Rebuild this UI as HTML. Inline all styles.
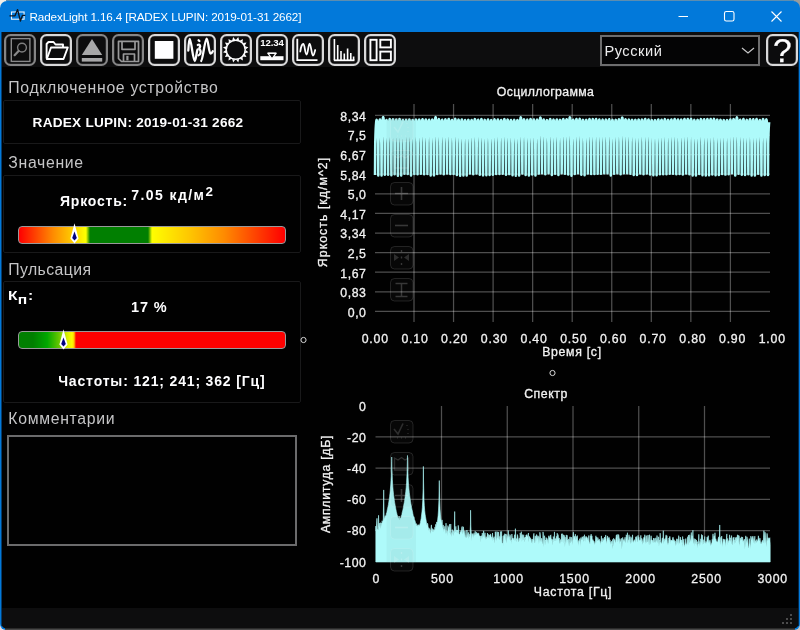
<!DOCTYPE html>
<html lang="ru">
<head>
<meta charset="utf-8">
<title>RadexLight 1.16.4</title>
<style>
*{box-sizing:border-box;margin:0;padding:0}
html,body{width:800px;height:630px;overflow:hidden}
body{background:#b8b8b8;opacity:0.9999;font-family:"Liberation Sans",sans-serif;position:relative}
.abs{position:absolute}
#topline{position:absolute;left:6px;top:0;width:788px;height:1px;background:#5c8db0}
#win{position:absolute;left:0;top:1px;width:800px;height:629px;background:#0279da;border-radius:7px 7px 6px 6px;overflow:hidden;will-change:transform}
#edge{position:absolute;left:1px;top:31px;width:1px;height:594px;background:#043d6e}
#edge2{position:absolute;left:798px;top:31px;width:1px;height:594px;background:#02284a}
#client{position:absolute;left:2px;top:31px;width:796px;height:596px;background:#000;overflow:hidden;border-radius:0 0 4px 4px;opacity:0.9999}
#botline{position:absolute;left:5px;top:627px;width:790px;height:2px;background:linear-gradient(#2a2a2a 0,#2a2a2a 1px,#484848 1px,#484848 2px)}
#title{position:absolute;left:29.5px;top:8px;height:16px;line-height:16px;font-size:11.7px;letter-spacing:-0.13px;color:#fff;white-space:nowrap}
#toolbar{position:absolute;left:0;top:0;width:796px;height:35px;background:#0e0e0e}
.tb{position:absolute;top:2px;width:32px;height:32px;border:2px solid #dadada;border-radius:6.5px;background:#0d0d0d;box-shadow:inset 0 0 0 0.6px rgba(255,255,255,0.35)}
.tb.dis{border-color:#868686;box-shadow:inset 0 0 0 0.6px rgba(255,255,255,0.2)}
.tb svg{position:absolute;left:-2px;top:-2px;width:32px;height:32px;overflow:visible}
#combo{position:absolute;left:598px;top:3px;width:160px;height:31px;border:2px solid #6e6e6e;background:#050505}
#combo span{position:absolute;left:2.4px;top:3.9px;font-size:14.6px;line-height:20px;color:#eee;letter-spacing:0.55px}
#status{position:absolute;left:0;top:576px;width:796px;height:20px;background:#0e0e0e}
.hd{position:absolute;left:6.3px;font-size:15.8px;line-height:20px;color:#c6c6c6;letter-spacing:0.68px;white-space:nowrap}
.grp{position:absolute;left:1px;width:298px;border:1px solid #1a1a1a;border-radius:2px}
.b{position:absolute;font-weight:bold;color:#fff;white-space:nowrap;line-height:20px}
.bar{position:absolute;left:16px;width:268px;height:18px;border:1px solid #9a9a9a;border-radius:4px}
.ct{position:absolute;-webkit-text-stroke:0.3px #f2f2f2;color:#f2f2f2;font-size:12.3px;line-height:14px;white-space:nowrap;letter-spacing:0.55px}
.yl{text-align:right;width:60px}
.xl{text-align:center;width:60px}
.zb{position:absolute;width:23px;height:23px;border:1px solid #303030;border-radius:4px;background:rgba(20,20,20,0.25)}
</style>
</head>
<body>
<div class="abs" style="left:0;top:0;width:8px;height:8px;background:#f2efe8"></div><div class="abs" style="left:0;top:622px;width:8px;height:8px;background:#ecdcdc"></div><div class="abs" style="left:792px;top:0;width:8px;height:8px;background:#9a9c9c"></div><div class="abs" style="left:792px;top:622px;width:8px;height:8px;background:#c8c8c8"></div>
<div id="topline"></div>
<div id="win">
  <!-- title bar -->
  <svg class="abs" style="left:9px;top:7px" width="17" height="15" viewBox="0 0 17 15">
    <rect x="2.5" y="4" width="12.6" height="7.2" fill="none" stroke="#eaf3fc" stroke-width="1.1"/>
    <path d="M0.5,7.8 H6 L8.6,1.6 L11.4,13 L13.4,7.4 H16.3" fill="none" stroke="#10151c" stroke-width="1.35" stroke-linejoin="round"/>
  </svg>
  <div id="title">RadexLight 1.16.4 [RADEX LUPIN: 2019-01-31 2662]</div>
  <svg class="abs" style="left:660px;top:0" width="139" height="31" viewBox="0 0 139 31">
    <path d="M18.5,15.5 H28" stroke="#fff" stroke-width="1" fill="none"/>
    <rect x="64.5" y="10.5" width="9.5" height="9.5" rx="1.8" fill="none" stroke="#fff" stroke-width="1.1"/>
    <path d="M111.5,10.5 L121.5,20.5 M121.5,10.5 L111.5,20.5" stroke="#fff" stroke-width="1.1" fill="none"/>
  </svg>
  <div id="edge"></div><div id="edge2"></div>
  <div id="client">
    <div id="toolbar">
      <div class="tb dis" style="left:2px"><svg viewBox="0 0 32 32" fill="none" stroke="#9c9c9c" stroke-width="1.4"><rect x="7.3" y="4.6" width="18.6" height="22.8" stroke="#8a8a8a"/><circle cx="18" cy="13.6" r="4.4" stroke="#7e7e7e"/><path d="M14.6,17 L10.6,21.2" stroke-width="2.2" stroke-linecap="round" stroke="#8a8a8a"/></svg></div>
      <div class="tb" style="left:38px"><svg viewBox="0 0 32 32" fill="none" stroke="#fff" stroke-width="1.9" stroke-linejoin="round"><path d="M6.6,24.5 V10 L8.5,8 H13.5 L15.5,10.5 H23 V13.2"/><path d="M6.8,25 L11,13.5 H27.8 L23.5,25 Z"/></svg></div>
      <div class="tb dis" style="left:74px"><svg viewBox="0 0 32 32" fill="#a8a8a8"><path d="M16,5 L26.2,21 H5.8 Z"/><rect x="5.8" y="24" width="20.4" height="3.6"/></svg></div>
      <div class="tb dis" style="left:110px"><svg viewBox="0 0 32 32" fill="none" stroke="#9a9a9a" stroke-width="1.7" stroke-linejoin="round"><path d="M6.5,7.3 H26.5 V27.5 H9.5 L6.5,24.5 Z"/><path d="M10,7.5 V15.3 H23 V7.5"/><path d="M11.5,27.3 V20 H22.5 V27.3"/><rect x="14.3" y="21.8" width="2.2" height="4.6" fill="#9a9a9a" stroke="none"/></svg></div>
      <div class="tb" style="left:146px"><svg viewBox="0 0 32 32"><rect x="6.8" y="7" width="18.6" height="17.8" fill="#fff"/></svg></div>
      <div class="tb" style="left:182px"><svg viewBox="0 0 32 32" fill="none" stroke="#fff" stroke-width="2.3" stroke-linecap="round" stroke-linejoin="round"><path d="M4.3,16.5 C4.6,10 5,5 5.8,5 C7.2,5 9,27 10.8,27 C12,27 12.6,17 13.6,15.5"/><path d="M14.6,6.3 L15.4,7"/><path d="M13.8,11 C15.5,10 16.8,11.5 15.8,13.5 C14.8,15 15,15 16,15.8 C17.3,17.5 16.5,21 14.5,21.3"/><path d="M17.3,27 C18.5,27 21,4.6 22.6,4.6 C24.2,4.6 24.8,19.5 26.6,19.5 C27.6,19.5 28.2,18.6 28.8,17.3"/></svg></div>
      <div class="tb" style="left:218px"><svg viewBox="0 0 32 32"><circle cx="15.7" cy="15.7" r="9.5" fill="none" stroke="#fff" stroke-width="1.5"/><path d="M25.60,15.99 L28.45,18.24 L24.95,19.22 Z M24.73,19.76 L26.51,22.92 L22.90,22.49 Z M22.49,22.90 L22.92,26.51 L19.76,24.73 Z M19.22,24.95 L18.24,28.45 L15.99,25.60 Z M15.41,25.60 L13.16,28.45 L12.18,24.95 Z M11.64,24.73 L8.48,26.51 L8.91,22.90 Z M8.50,22.49 L4.89,22.92 L6.67,19.76 Z M6.45,19.22 L2.95,18.24 L5.80,15.99 Z M5.80,15.41 L2.95,13.16 L6.45,12.18 Z M6.67,11.64 L4.89,8.48 L8.50,8.91 Z M8.91,8.50 L8.48,4.89 L11.64,6.67 Z M12.18,6.45 L13.16,2.95 L15.41,5.80 Z M15.99,5.80 L18.24,2.95 L19.22,6.45 Z M19.76,6.67 L22.92,4.89 L22.49,8.50 Z M22.90,8.91 L26.51,8.48 L24.73,11.64 Z M24.95,12.18 L28.45,13.16 L25.60,15.41 Z" fill="#fff"/></svg></div>
      <div class="tb" style="left:254px"><div style="position:absolute;left:-2px;top:1.4px;width:32px;text-align:center;font-weight:bold;font-size:9.6px;line-height:12px;color:#fff;letter-spacing:-0.1px">12.34</div><svg viewBox="0 0 32 32"><rect x="4.3" y="22.2" width="23.2" height="4" fill="#fff"/><path d="M12,19.3 H20 L16,24.8 Z" fill="#111" stroke="#fff" stroke-width="1.3" stroke-linejoin="round"/><path d="M11.6,19.2 H20.4" stroke="#fff" stroke-width="1.4"/></svg></div>
      <div class="tb" style="left:290px"><svg viewBox="0 0 32 32" fill="none" stroke="#fff" stroke-width="1.8"><path d="M5.3,4.8 V26.2 H25.5"/><path d="M8.3,17.5 C9,12 10.4,10 11.3,10 C12.8,10 13,20.5 14.6,20.5 C16,20.5 16.3,9.6 17.6,9.6 C19,9.6 19.5,21.5 21,21.5 C22,21.5 22.5,18.5 23.2,16" stroke-linecap="round"/></svg></div>
      <div class="tb" style="left:326px"><svg viewBox="0 0 32 32" fill="none" stroke="#fff" stroke-width="1.6"><path d="M5.8,26.3 H26.5" stroke-width="1.8"/><path d="M6.4,5 V26 M9.7,11 V26 M13,17 V26 M16.3,19.5 V26 M19.6,14.5 V26 M22.8,19 V26 M25.6,22.5 V26"/></svg></div>
      <div class="tb" style="left:362px"><svg viewBox="0 0 32 32" fill="none" stroke="#fff" stroke-width="1.9"><rect x="6.4" y="5.8" width="6.2" height="20.4"/><rect x="16.3" y="5.8" width="10.6" height="7.6"/><rect x="16.3" y="17.6" width="10.6" height="8.6"/></svg></div>
      <div id="combo"><span>Русский</span>
        <svg class="abs" style="left:138px;top:9px" width="16" height="10" viewBox="0 0 16 10"><path d="M2,2 L8,7 L14,2" fill="none" stroke="#c8c8c8" stroke-width="1.2"/></svg>
      </div>
      <div class="tb" style="left:764px"><svg viewBox="0 0 32 32"><text x="16.4" y="28.2" text-anchor="middle" font-family="Liberation Sans,sans-serif" font-size="33.5" fill="#fff" stroke="#fff" stroke-width="0.25">?</text></svg></div>
    </div>

    <!-- left panel : coordinates are page_y-32, page_x-2 -->
    <div class="hd" style="top:45.5px">Подключенное устройство</div>
    <div class="grp" style="top:68px;height:44px"></div>
    <div class="b" style="left:30.6px;top:81.3px;font-size:13.6px;letter-spacing:0.24px">RADEX LUPIN: 2019-01-31 2662</div>

    <div class="hd" style="top:121.3px">Значение</div>
    <div class="grp" style="top:143px;height:78px"></div>
    <div class="b" style="left:58px;top:159.4px;font-size:14px;letter-spacing:0.78px">Яркость:</div>
    <div class="b" style="left:129.3px;top:153px;font-size:14px;letter-spacing:1.42px">7.05 кд/м<span style="font-size:13.4px;position:relative;top:-4.2px;left:0.2px;letter-spacing:0">2</span></div>
    <div class="bar" style="top:194px;background:linear-gradient(to right,#ff0000 0px,#ff8c00 34px,#ffc800 52px,#ffff00 66px,#ffff00 67px,#008000 71px,#008000 129px,#ffff00 133px,#ffc800 170px,#ff8c00 205px,#ff3000 245px,#ff0000 266px)"></div>

    <svg class="abs" style="left:66.9px;top:191.2px" width="11" height="22" viewBox="0 0 11 22"><path d="M5.5,0.3 L9.6,15.6 L5.5,20.6 L1.4,15.6 Z" fill="#fff"/><path d="M5.5,8.6 L7.8,15 L5.5,17.4 L3.2,15 Z" fill="#000080"/></svg>
    <div class="hd" style="top:227.5px;letter-spacing:0.4px">Пульсация</div>
    <div class="grp" style="top:249px;height:122px"></div>
    <div class="b" style="left:6.4px;top:254.3px;font-size:13.6px;letter-spacing:0.2px;transform:scaleX(1.15);transform-origin:0 0">К<span style="font-size:13.6px;position:relative;top:3.5px;letter-spacing:0.7px">п</span>:</div>
    <div class="b" style="left:129px;top:265px;font-size:14.5px;letter-spacing:0.9px">17 %</div>
    <div class="bar" style="top:299px;background:linear-gradient(to right,#008000 0px,#008000 14px,#00a800 28px,#66c800 40px,#d8ee00 48px,#ffff00 53px,#ffd000 55px,#ff0000 57px,#ff0000 266px)"></div>
    <svg class="abs" style="left:55.9px;top:297.4px" width="11" height="22" viewBox="0 0 11 22"><path d="M5.5,0.3 L9.6,15.6 L5.5,20.6 L1.4,15.6 Z" fill="#fff"/><path d="M5.5,8.6 L7.8,15 L5.5,17.4 L3.2,15 Z" fill="#000080"/></svg>
    <div class="b" style="left:56.2px;top:339px;font-size:14px;letter-spacing:0.84px">Частоты: 121; 241; 362 [Гц]</div>

    <div class="hd" style="top:376.8px">Комментарии</div>
    <div class="abs" style="left:5px;top:403px;width:290px;height:111px;border:2px solid #6c6c6c"></div>

    <div id="status">
      <svg class="abs" style="left:780.4px;top:5.8px" width="12" height="12" viewBox="0 0 12 12" fill="#4c4c4c">
        <rect x="8" y="0" width="2" height="2"/><rect x="4" y="4" width="2" height="2"/><rect x="8" y="4" width="2" height="2"/>
        <rect x="0" y="8" width="2" height="2"/><rect x="4" y="8" width="2" height="2"/><rect x="8" y="8" width="2" height="2"/>
      </svg>
    </div>
  </div>
  <div id="botline"></div>
</div>

<!-- charts: absolute page coordinates -->
<svg class="abs" style="left:0;top:0" width="800" height="630" viewBox="0 0 800 630">
  <g stroke="rgba(255,255,255,0.31)" stroke-width="1.25" fill="none">
    <path d="M375,115.4 H770 M375,135.0 H770 M375,154.6 H770 M375,174.2 H770 M375,193.8 H770 M375,213.4 H770 M375,233.0 H770 M375,252.6 H770 M375,272.2 H770 M375,291.8 H770 M375,311.4 H770"/>
    <path d="M414.00,104 V322 M453.55,104 V322 M493.10,104 V322 M532.65,104 V322 M572.20,104 V322 M611.75,104 V322 M651.30,104 V322 M690.85,104 V322 M730.40,104 V322"/>
    <path d="M375.5,436.75 H770 M375.5,468.00 H770 M375.5,499.25 H770 M375.5,530.50 H770"/>
    <path d="M441.50,406 V562 M507.25,406 V562 M573.00,406 V562 M638.75,406 V562 M704.50,406 V562"/>
  </g>
  <path d="M375.00,174.93 L375.23,143.56 L375.47,134.69 L375.70,128.84 L375.94,124.75 L376.17,122.01 L376.40,120.41 L376.64,119.89 L376.87,120.41 L377.11,122.01 L377.34,124.75 L377.57,128.84 L377.81,134.69 L378.04,143.56 L378.27,175.58 L378.51,143.81 L378.74,134.72 L378.98,128.70 L379.21,124.48 L379.44,121.64 L379.68,119.98 L379.91,119.44 L380.15,119.98 L380.38,121.64 L380.61,124.48 L380.85,128.70 L381.08,134.72 L381.32,143.81 L381.55,175.61 L381.78,142.51 L382.02,133.04 L382.25,126.77 L382.49,122.38 L382.72,119.41 L382.95,117.69 L383.19,117.12 L383.42,117.69 L383.66,119.41 L383.89,122.38 L384.12,126.77 L384.36,133.04 L384.59,142.51 L384.82,174.64 L385.06,143.40 L385.29,134.60 L385.53,128.81 L385.76,124.78 L385.99,122.07 L386.23,120.50 L386.46,119.98 L386.70,120.50 L386.93,122.07 L387.16,124.78 L387.40,128.81 L387.63,134.60 L387.87,143.40 L388.10,174.67 L388.33,142.91 L388.57,133.96 L388.80,128.07 L389.04,123.97 L389.27,121.22 L389.50,119.62 L389.74,119.09 L389.97,119.62 L390.20,121.22 L390.44,123.97 L390.67,128.07 L390.91,133.96 L391.14,142.91 L391.37,175.19 L391.61,143.44 L391.84,134.42 L392.08,128.47 L392.31,124.30 L392.54,121.49 L392.78,119.86 L393.01,119.33 L393.25,119.86 L393.48,121.49 L393.71,124.30 L393.95,128.47 L394.18,134.42 L394.42,143.44 L394.65,174.27 L394.88,142.89 L395.12,134.11 L395.35,128.35 L395.59,124.35 L395.82,121.66 L396.05,120.11 L396.29,119.60 L396.52,120.11 L396.75,121.66 L396.99,124.35 L397.22,128.35 L397.46,134.11 L397.69,142.89 L397.92,175.64 L398.16,143.64 L398.39,134.48 L398.63,128.41 L398.86,124.15 L399.09,121.28 L399.33,119.61 L399.56,119.06 L399.80,119.61 L400.03,121.28 L400.26,124.15 L400.50,128.41 L400.73,134.48 L400.97,143.64 L401.20,175.39 L401.43,143.95 L401.67,134.98 L401.90,129.05 L402.14,124.89 L402.37,122.09 L402.60,120.46 L402.84,119.93 L403.07,120.46 L403.30,122.09 L403.54,124.89 L403.77,129.05 L404.01,134.98 L404.24,143.95 L404.47,173.65 L404.71,142.55 L404.94,133.94 L405.18,128.33 L405.41,124.44 L405.64,121.85 L405.88,120.34 L406.11,119.85 L406.35,120.34 L406.58,121.85 L406.81,124.44 L407.05,128.33 L407.28,133.94 L407.52,142.55 L407.75,174.11 L407.98,142.78 L408.22,134.04 L408.45,128.31 L408.68,124.34 L408.92,121.68 L409.15,120.13 L409.39,119.63 L409.62,120.13 L409.85,121.68 L410.09,124.34 L410.32,128.31 L410.56,134.04 L410.79,142.78 L411.02,175.60 L411.26,144.15 L411.49,135.15 L411.73,129.18 L411.96,125.00 L412.19,122.18 L412.43,120.53 L412.66,120.00 L412.90,120.53 L413.13,122.18 L413.36,125.00 L413.60,129.18 L413.83,135.15 L414.07,144.15 L414.30,174.00 L414.53,142.66 L414.77,133.93 L415.00,128.22 L415.23,124.26 L415.47,121.60 L415.70,120.07 L415.94,119.56 L416.17,120.07 L416.40,121.60 L416.64,124.26 L416.87,128.22 L417.11,133.93 L417.34,142.66 L417.57,174.25 L417.81,142.83 L418.04,134.04 L418.28,128.29 L418.51,124.28 L418.74,121.60 L418.98,120.04 L419.21,119.53 L419.45,120.04 L419.68,121.60 L419.91,124.28 L420.15,128.29 L420.38,134.04 L420.61,142.83 L420.85,173.71 L421.08,142.25 L421.32,133.53 L421.55,127.84 L421.78,123.90 L422.02,121.27 L422.25,119.74 L422.49,119.24 L422.72,119.74 L422.95,121.27 L423.19,123.90 L423.42,127.84 L423.66,133.53 L423.89,142.25 L424.12,174.28 L424.36,142.81 L424.59,134.00 L424.83,128.23 L425.06,124.21 L425.29,121.52 L425.53,119.96 L425.76,119.45 L426.00,119.96 L426.23,121.52 L426.46,124.21 L426.70,128.23 L426.93,134.00 L427.16,142.81 L427.40,173.88 L427.63,142.66 L427.87,133.98 L428.10,128.31 L428.33,124.38 L428.57,121.75 L428.80,120.23 L429.04,119.73 L429.27,120.23 L429.50,121.75 L429.74,124.38 L429.97,128.31 L430.21,133.98 L430.44,142.66 L430.67,175.46 L430.91,143.80 L431.14,134.76 L431.38,128.77 L431.61,124.58 L431.84,121.76 L432.08,120.11 L432.31,119.57 L432.54,120.11 L432.78,121.76 L433.01,124.58 L433.25,128.77 L433.48,134.76 L433.71,143.80 L433.95,175.37 L434.18,142.33 L434.42,132.92 L434.65,126.70 L434.88,122.34 L435.12,119.41 L435.35,117.70 L435.59,117.14 L435.82,117.70 L436.05,119.41 L436.29,122.34 L436.52,126.70 L436.76,132.92 L436.99,142.33 L437.22,174.04 L437.46,142.46 L437.69,133.65 L437.93,127.90 L438.16,123.90 L438.39,121.22 L438.63,119.67 L438.86,119.17 L439.09,119.67 L439.33,121.22 L439.56,123.90 L439.80,127.90 L440.03,133.65 L440.26,142.46 L440.50,173.50 L440.73,142.34 L440.97,133.74 L441.20,128.14 L441.43,124.27 L441.67,121.68 L441.90,120.19 L442.14,119.70 L442.37,120.19 L442.60,121.68 L442.84,124.27 L443.07,128.14 L443.31,133.74 L443.54,142.34 L443.77,174.23 L444.01,142.73 L444.24,133.92 L444.48,128.15 L444.71,124.14 L444.94,121.45 L445.18,119.89 L445.41,119.38 L445.64,119.89 L445.88,121.45 L446.11,124.14 L446.35,128.15 L446.58,133.92 L446.81,142.73 L447.05,173.59 L447.28,141.99 L447.52,133.25 L447.75,127.55 L447.98,123.61 L448.22,120.98 L448.45,119.45 L448.69,118.96 L448.92,119.45 L449.15,120.98 L449.39,123.61 L449.62,127.55 L449.86,133.25 L450.09,141.99 L450.32,174.05 L450.56,142.94 L450.79,134.27 L451.02,128.60 L451.26,124.66 L451.49,122.02 L451.73,120.49 L451.96,119.99 L452.19,120.49 L452.43,122.02 L452.66,124.66 L452.90,128.60 L453.13,134.27 L453.36,142.94 L453.60,174.09 L453.83,142.35 L454.07,133.49 L454.30,127.69 L454.53,123.67 L454.77,120.97 L455.00,119.41 L455.24,118.90 L455.47,119.41 L455.70,120.97 L455.94,123.67 L456.17,127.69 L456.41,133.49 L456.64,142.35 L456.87,175.03 L457.11,143.48 L457.34,134.54 L457.57,128.64 L457.81,124.52 L458.04,121.75 L458.28,120.14 L458.51,119.61 L458.74,120.14 L458.98,121.75 L459.21,124.52 L459.45,128.64 L459.68,134.54 L459.91,143.48 L460.15,175.70 L460.38,143.96 L460.62,134.86 L460.85,128.82 L461.08,124.59 L461.32,121.73 L461.55,120.07 L461.79,119.52 L462.02,120.07 L462.25,121.73 L462.49,124.59 L462.72,128.82 L462.95,134.86 L463.19,143.96 L463.42,175.46 L463.66,144.04 L463.89,135.07 L464.12,129.13 L464.36,124.97 L464.59,122.16 L464.83,120.53 L465.06,120.00 L465.29,120.53 L465.53,122.16 L465.76,124.97 L466.00,129.13 L466.23,135.07 L466.46,144.04 L466.70,175.43 L466.93,143.89 L467.17,134.89 L467.40,128.93 L467.63,124.76 L467.87,121.95 L468.10,120.31 L468.34,119.77 L468.57,120.31 L468.80,121.95 L469.04,124.76 L469.27,128.93 L469.50,134.89 L469.74,143.89 L469.97,173.51 L470.21,142.51 L470.44,133.95 L470.67,128.37 L470.91,124.52 L471.14,121.95 L471.38,120.46 L471.61,119.97 L471.84,120.46 L472.08,121.95 L472.31,124.52 L472.55,128.37 L472.78,133.95 L473.01,142.51 L473.25,174.34 L473.48,142.62 L473.72,133.73 L473.95,127.90 L474.18,123.84 L474.42,121.12 L474.65,119.54 L474.88,119.03 L475.12,119.54 L475.35,121.12 L475.59,123.84 L475.82,127.90 L476.05,133.73 L476.29,142.62 L476.52,173.53 L476.76,142.39 L476.99,133.79 L477.22,128.19 L477.46,124.31 L477.69,121.72 L477.93,120.23 L478.16,119.74 L478.39,120.23 L478.63,121.72 L478.86,124.31 L479.10,128.19 L479.33,133.79 L479.56,142.39 L479.80,174.84 L480.03,143.00 L480.27,134.00 L480.50,128.08 L480.73,123.95 L480.97,121.17 L481.20,119.56 L481.43,119.03 L481.67,119.56 L481.90,121.17 L482.14,123.95 L482.37,128.08 L482.60,134.00 L482.84,143.00 L483.07,175.37 L483.31,143.89 L483.54,134.92 L483.77,128.98 L484.01,124.82 L484.24,122.02 L484.48,120.39 L484.71,119.86 L484.94,120.39 L485.18,122.02 L485.41,124.82 L485.65,128.98 L485.88,134.92 L486.11,143.89 L486.35,175.16 L486.58,143.52 L486.82,134.53 L487.05,128.60 L487.28,124.45 L487.52,121.65 L487.75,120.03 L487.98,119.50 L488.22,120.03 L488.45,121.65 L488.69,124.45 L488.92,128.60 L489.15,134.53 L489.39,143.52 L489.62,175.08 L489.86,143.78 L490.09,134.90 L490.32,129.04 L490.56,124.95 L490.79,122.19 L491.03,120.59 L491.26,120.06 L491.49,120.59 L491.73,122.19 L491.96,124.95 L492.20,129.04 L492.43,134.90 L492.66,143.78 L492.90,174.81 L493.13,143.19 L493.36,134.26 L493.60,128.38 L493.83,124.28 L494.07,121.52 L494.30,119.93 L494.53,119.40 L494.77,119.93 L495.00,121.52 L495.24,124.28 L495.47,128.38 L495.70,134.26 L495.94,143.19 L496.17,173.98 L496.41,142.58 L496.64,133.84 L496.87,128.12 L497.11,124.16 L497.34,121.50 L497.58,119.96 L497.81,119.46 L498.04,119.96 L498.28,121.50 L498.51,124.16 L498.75,128.12 L498.98,133.84 L499.21,142.58 L499.45,174.01 L499.68,142.92 L499.91,134.26 L500.15,128.59 L500.38,124.66 L500.62,122.03 L500.85,120.50 L501.08,120.00 L501.32,120.50 L501.55,122.03 L501.79,124.66 L502.02,128.59 L502.25,134.26 L502.49,142.92 L502.72,173.75 L502.96,142.16 L503.19,133.40 L503.42,127.68 L503.66,123.72 L503.89,121.07 L504.13,119.54 L504.36,119.04 L504.59,119.54 L504.83,121.07 L505.06,123.72 L505.29,127.68 L505.53,133.40 L505.76,142.16 L506.00,174.75 L506.23,143.26 L506.46,134.37 L506.70,128.53 L506.93,124.45 L507.17,121.71 L507.40,120.12 L507.63,119.60 L507.87,120.12 L508.10,121.71 L508.34,124.45 L508.57,128.53 L508.80,134.37 L509.04,143.26 L509.27,174.12 L509.51,143.00 L509.74,134.31 L509.97,128.62 L510.21,124.67 L510.44,122.03 L510.68,120.49 L510.91,119.99 L511.14,120.49 L511.38,122.03 L511.61,124.67 L511.84,128.62 L512.08,134.31 L512.31,143.00 L512.55,175.22 L512.78,143.79 L513.01,134.85 L513.25,128.94 L513.48,124.81 L513.72,122.02 L513.95,120.41 L514.18,119.87 L514.42,120.41 L514.65,122.02 L514.89,124.81 L515.12,128.94 L515.35,134.85 L515.59,143.79 L515.82,175.63 L516.06,144.21 L516.29,135.21 L516.52,129.25 L516.76,125.07 L516.99,122.25 L517.22,120.60 L517.46,120.06 L517.69,120.60 L517.93,122.25 L518.16,125.07 L518.39,129.25 L518.63,135.21 L518.86,144.21 L519.10,175.50 L519.33,142.52 L519.56,133.10 L519.80,126.87 L520.03,122.51 L520.27,119.56 L520.50,117.85 L520.73,117.29 L520.97,117.85 L521.20,119.56 L521.44,122.51 L521.67,126.87 L521.90,133.10 L522.14,142.52 L522.37,173.50 L522.61,142.14 L522.84,133.48 L523.07,127.85 L523.31,123.95 L523.54,121.34 L523.77,119.84 L524.01,119.34 L524.24,119.84 L524.48,121.34 L524.71,123.95 L524.94,127.85 L525.18,133.48 L525.41,142.14 L525.65,175.11 L525.88,143.57 L526.11,134.62 L526.35,128.71 L526.58,124.58 L526.82,121.80 L527.05,120.19 L527.28,119.66 L527.52,120.19 L527.75,121.80 L527.99,124.58 L528.22,128.71 L528.45,134.62 L528.69,143.57 L528.92,175.45 L529.16,143.50 L529.39,134.38 L529.62,128.35 L529.86,124.12 L530.09,121.27 L530.32,119.61 L530.56,119.07 L530.79,119.61 L531.03,121.27 L531.26,124.12 L531.49,128.35 L531.73,134.38 L531.96,143.50 L532.20,174.56 L532.43,143.05 L532.66,134.19 L532.90,128.37 L533.13,124.32 L533.37,121.59 L533.60,120.01 L533.83,119.50 L534.07,120.01 L534.30,121.59 L534.54,124.32 L534.77,128.37 L535.00,134.19 L535.24,143.05 L535.47,175.50 L535.70,143.88 L535.94,134.85 L536.17,128.86 L536.41,124.67 L536.64,121.85 L536.87,120.20 L537.11,119.66 L537.34,120.20 L537.58,121.85 L537.81,124.67 L538.04,128.86 L538.28,134.85 L538.51,143.88 L538.75,173.62 L538.98,141.19 L539.21,132.21 L539.45,126.36 L539.68,122.31 L539.92,119.60 L540.15,118.04 L540.38,117.53 L540.62,118.04 L540.85,119.60 L541.09,122.31 L541.32,126.36 L541.55,132.21 L541.79,141.19 L542.02,173.30 L542.25,142.05 L542.49,133.44 L542.72,127.86 L542.96,123.99 L543.19,121.42 L543.42,119.93 L543.66,119.44 L543.89,119.93 L544.13,121.42 L544.36,123.99 L544.59,127.86 L544.83,133.44 L545.06,142.05 L545.30,174.36 L545.53,143.21 L545.76,134.47 L546.00,128.75 L546.23,124.76 L546.47,122.09 L546.70,120.54 L546.93,120.03 L547.17,120.54 L547.40,122.09 L547.63,124.76 L547.87,128.75 L548.10,134.47 L548.34,143.21 L548.57,173.23 L548.80,141.77 L549.04,133.12 L549.27,127.50 L549.51,123.62 L549.74,121.03 L549.97,119.54 L550.21,119.05 L550.44,119.54 L550.68,121.03 L550.91,123.62 L551.14,127.50 L551.38,133.12 L551.61,141.77 L551.85,175.09 L552.08,143.54 L552.31,134.59 L552.55,128.69 L552.78,124.56 L553.02,121.78 L553.25,120.16 L553.48,119.63 L553.72,120.16 L553.95,121.78 L554.18,124.56 L554.42,128.69 L554.65,134.59 L554.89,143.54 L555.12,173.77 L555.35,142.41 L555.59,133.70 L555.82,128.03 L556.06,124.09 L556.29,121.46 L556.52,119.94 L556.76,119.44 L556.99,119.94 L557.23,121.46 L557.46,124.09 L557.69,128.03 L557.93,133.70 L558.16,142.41 L558.40,174.91 L558.63,143.50 L558.86,134.62 L559.10,128.76 L559.33,124.67 L559.56,121.92 L559.80,120.33 L560.03,119.80 L560.27,120.33 L560.50,121.92 L560.73,124.67 L560.97,128.76 L561.20,134.62 L561.44,143.50 L561.67,173.22 L561.90,141.76 L562.14,133.11 L562.37,127.50 L562.61,123.63 L562.84,121.04 L563.07,119.55 L563.31,119.06 L563.54,119.55 L563.78,121.04 L564.01,123.63 L564.24,127.50 L564.48,133.11 L564.71,141.76 L564.95,173.65 L565.18,142.17 L565.41,133.46 L565.65,127.78 L565.88,123.84 L566.11,121.21 L566.35,119.69 L566.58,119.20 L566.82,119.69 L567.05,121.21 L567.28,123.84 L567.52,127.78 L567.75,133.46 L567.99,142.17 L568.22,174.42 L568.45,141.69 L568.69,132.50 L568.92,126.47 L569.16,122.28 L569.39,119.46 L569.62,117.83 L569.86,117.30 L570.09,117.83 L570.33,119.46 L570.56,122.28 L570.79,126.47 L571.03,132.50 L571.26,141.69 L571.50,175.69 L571.73,144.07 L571.96,135.01 L572.20,129.00 L572.43,124.78 L572.66,121.94 L572.90,120.28 L573.13,119.74 L573.37,120.28 L573.60,121.94 L573.83,124.78 L574.07,129.00 L574.30,135.01 L574.54,144.07 L574.77,173.97 L575.00,142.28 L575.24,133.45 L575.47,127.68 L575.71,123.68 L575.94,121.00 L576.17,119.45 L576.41,118.94 L576.64,119.45 L576.88,121.00 L577.11,123.68 L577.34,127.68 L577.58,133.45 L577.81,142.28 L578.04,173.34 L578.28,141.77 L578.51,133.07 L578.75,127.42 L578.98,123.51 L579.21,120.90 L579.45,119.40 L579.68,118.90 L579.92,119.40 L580.15,120.90 L580.38,123.51 L580.62,127.42 L580.85,133.07 L581.09,141.77 L581.32,174.82 L581.55,143.43 L581.79,134.57 L582.02,128.73 L582.26,124.66 L582.49,121.92 L582.72,120.33 L582.96,119.81 L583.19,120.33 L583.43,121.92 L583.66,124.66 L583.89,128.73 L584.13,134.57 L584.36,143.43 L584.59,175.25 L584.83,143.78 L585.06,134.83 L585.30,128.91 L585.53,124.77 L585.76,121.98 L586.00,120.36 L586.23,119.83 L586.47,120.36 L586.70,121.98 L586.93,124.77 L587.17,128.91 L587.40,134.83 L587.64,143.78 L587.87,173.44 L588.10,141.94 L588.34,133.25 L588.57,127.60 L588.81,123.69 L589.04,121.08 L589.27,119.57 L589.51,119.08 L589.74,119.57 L589.97,121.08 L590.21,123.69 L590.44,127.60 L590.68,133.25 L590.91,141.94 L591.14,174.07 L591.38,142.46 L591.61,133.65 L591.85,127.88 L592.08,123.87 L592.31,121.19 L592.55,119.64 L592.78,119.13 L593.02,119.64 L593.25,121.19 L593.48,123.87 L593.72,127.88 L593.95,133.65 L594.19,142.46 L594.42,174.05 L594.65,142.37 L594.89,133.54 L595.12,127.76 L595.36,123.75 L595.59,121.06 L595.82,119.51 L596.06,119.00 L596.29,119.51 L596.52,121.06 L596.76,123.75 L596.99,127.76 L597.23,133.54 L597.46,142.37 L597.69,173.82 L597.93,142.49 L598.16,133.78 L598.40,128.10 L598.63,124.16 L598.86,121.53 L599.10,120.00 L599.33,119.50 L599.57,120.00 L599.80,121.53 L600.03,124.16 L600.27,128.10 L600.50,133.78 L600.74,142.49 L600.97,173.72 L601.20,142.51 L601.44,133.85 L601.67,128.21 L601.90,124.30 L602.14,121.68 L602.37,120.17 L602.61,119.67 L602.84,120.17 L603.07,121.68 L603.31,124.30 L603.54,128.21 L603.78,133.85 L604.01,142.51 L604.24,173.25 L604.48,142.10 L604.71,133.53 L604.95,127.97 L605.18,124.13 L605.41,121.56 L605.65,120.08 L605.88,119.60 L606.12,120.08 L606.35,121.56 L606.58,124.13 L606.82,127.97 L607.05,133.53 L607.29,142.10 L607.52,173.32 L607.75,141.92 L607.99,133.28 L608.22,127.67 L608.45,123.79 L608.69,121.20 L608.92,119.70 L609.16,119.21 L609.39,119.70 L609.62,121.20 L609.86,123.79 L610.09,127.67 L610.33,133.28 L610.56,141.92 L610.79,175.43 L611.03,143.96 L611.26,134.98 L611.50,129.03 L611.73,124.86 L611.96,122.06 L612.20,120.42 L612.43,119.89 L612.67,120.42 L612.90,122.06 L613.13,124.86 L613.37,129.03 L613.60,134.98 L613.84,143.96 L614.07,173.68 L614.30,142.60 L614.54,133.99 L614.77,128.37 L615.00,124.49 L615.24,121.89 L615.47,120.39 L615.71,119.89 L615.94,120.39 L616.17,121.89 L616.41,124.49 L616.64,128.37 L616.88,133.99 L617.11,142.60 L617.34,173.23 L617.58,141.90 L617.81,133.29 L618.05,127.70 L618.28,123.84 L618.51,121.27 L618.75,119.78 L618.98,119.29 L619.22,119.78 L619.45,121.27 L619.68,123.84 L619.92,127.70 L620.15,133.29 L620.38,141.90 L620.62,174.34 L620.85,141.78 L621.09,132.65 L621.32,126.67 L621.55,122.50 L621.79,119.71 L622.02,118.09 L622.26,117.56 L622.49,118.09 L622.72,119.71 L622.96,122.50 L623.19,126.67 L623.43,132.65 L623.66,141.78 L623.89,173.25 L624.13,141.93 L624.36,133.31 L624.60,127.72 L624.83,123.85 L625.06,121.28 L625.30,119.79 L625.53,119.30 L625.77,119.79 L626.00,121.28 L626.23,123.85 L626.47,127.72 L626.70,133.31 L626.93,141.93 L627.17,173.35 L627.40,142.15 L627.64,133.55 L627.87,127.97 L628.10,124.11 L628.34,121.53 L628.57,120.04 L628.81,119.56 L629.04,120.04 L629.27,121.53 L629.51,124.11 L629.74,127.97 L629.98,133.55 L630.21,142.15 L630.44,173.63 L630.68,142.51 L630.91,133.90 L631.15,128.29 L631.38,124.41 L631.61,121.81 L631.85,120.31 L632.08,119.82 L632.31,120.31 L632.55,121.81 L632.78,124.41 L633.02,128.29 L633.25,133.90 L633.48,142.51 L633.72,175.01 L633.95,143.56 L634.19,134.66 L634.42,128.78 L634.65,124.67 L634.89,121.91 L635.12,120.31 L635.36,119.78 L635.59,120.31 L635.82,121.91 L636.06,124.67 L636.29,128.78 L636.53,134.66 L636.76,143.56 L636.99,175.09 L637.23,143.51 L637.46,134.55 L637.70,128.64 L637.93,124.50 L638.16,121.72 L638.40,120.10 L638.63,119.57 L638.86,120.10 L639.10,121.72 L639.33,124.50 L639.57,128.64 L639.80,134.55 L640.03,143.51 L640.27,173.41 L640.50,142.25 L640.74,133.65 L640.97,128.07 L641.20,124.21 L641.44,121.63 L641.67,120.14 L641.91,119.65 L642.14,120.14 L642.37,121.63 L642.61,124.21 L642.84,128.07 L643.08,133.65 L643.31,142.25 L643.54,174.25 L643.78,142.53 L644.01,133.66 L644.24,127.84 L644.48,123.80 L644.71,121.09 L644.95,119.52 L645.18,119.00 L645.41,119.52 L645.65,121.09 L645.88,123.80 L646.12,127.84 L646.35,133.66 L646.58,142.53 L646.82,173.39 L647.05,142.13 L647.29,133.52 L647.52,127.91 L647.75,124.04 L647.99,121.46 L648.22,119.96 L648.46,119.48 L648.69,119.96 L648.92,121.46 L649.16,124.04 L649.39,127.91 L649.63,133.52 L649.86,142.13 L650.09,174.41 L650.33,143.25 L650.56,134.51 L650.79,128.77 L651.03,124.78 L651.26,122.10 L651.50,120.55 L651.73,120.04 L651.96,120.55 L652.20,122.10 L652.43,124.78 L652.67,128.77 L652.90,134.51 L653.13,143.25 L653.37,175.29 L653.60,143.95 L653.84,135.02 L654.07,129.12 L654.30,124.99 L654.54,122.21 L654.77,120.59 L655.01,120.06 L655.24,120.59 L655.47,122.21 L655.71,124.99 L655.94,129.12 L656.18,135.02 L656.41,143.95 L656.64,175.32 L656.88,143.65 L657.11,134.63 L657.34,128.67 L657.58,124.49 L657.81,121.68 L658.05,120.05 L658.28,119.51 L658.51,120.05 L658.75,121.68 L658.98,124.49 L659.22,128.67 L659.45,134.63 L659.68,143.65 L659.92,174.32 L660.15,142.98 L660.39,134.20 L660.62,128.44 L660.85,124.43 L661.09,121.75 L661.32,120.19 L661.56,119.68 L661.79,120.19 L662.02,121.75 L662.26,124.43 L662.49,128.44 L662.72,134.20 L662.96,142.98 L663.19,174.33 L663.43,142.67 L663.66,133.80 L663.89,127.99 L664.13,123.94 L664.36,121.23 L664.60,119.66 L664.83,119.14 L665.06,119.66 L665.30,121.23 L665.53,123.94 L665.77,127.99 L666.00,133.80 L666.23,142.67 L666.47,174.31 L666.70,143.02 L666.94,134.26 L667.17,128.51 L667.40,124.52 L667.64,121.84 L667.87,120.28 L668.11,119.77 L668.34,120.28 L668.57,121.84 L668.81,124.52 L669.04,128.51 L669.27,134.26 L669.51,143.02 L669.74,173.77 L669.98,142.42 L670.21,133.72 L670.44,128.05 L670.68,124.12 L670.91,121.49 L671.15,119.97 L671.38,119.47 L671.61,119.97 L671.85,121.49 L672.08,124.12 L672.32,128.05 L672.55,133.72 L672.78,142.42 L673.02,173.80 L673.25,142.17 L673.49,133.39 L673.72,127.66 L673.95,123.69 L674.19,121.03 L674.42,119.50 L674.65,118.99 L674.89,119.50 L675.12,121.03 L675.36,123.69 L675.59,127.66 L675.82,133.39 L676.06,142.17 L676.29,174.18 L676.53,142.74 L676.76,133.96 L676.99,128.21 L677.23,124.21 L677.46,121.53 L677.70,119.98 L677.93,119.47 L678.16,119.98 L678.40,121.53 L678.63,124.21 L678.87,128.21 L679.10,133.96 L679.33,142.74 L679.57,173.97 L679.80,142.62 L680.04,133.89 L680.27,128.18 L680.50,124.22 L680.74,121.57 L680.97,120.04 L681.20,119.53 L681.44,120.04 L681.67,121.57 L681.91,124.22 L682.14,128.18 L682.37,133.89 L682.61,142.62 L682.84,174.53 L683.08,142.72 L683.31,133.78 L683.54,127.91 L683.78,123.82 L684.01,121.07 L684.25,119.48 L684.48,118.96 L684.71,119.48 L684.95,121.07 L685.18,123.82 L685.42,127.91 L685.65,133.78 L685.88,142.72 L686.12,173.50 L686.35,141.92 L686.58,133.20 L686.82,127.52 L687.05,123.59 L687.29,120.97 L687.52,119.45 L687.75,118.96 L687.99,119.45 L688.22,120.97 L688.46,123.59 L688.69,127.52 L688.92,133.20 L689.16,141.92 L689.39,174.32 L689.63,142.56 L689.86,133.66 L690.09,127.83 L690.33,123.77 L690.56,121.05 L690.80,119.47 L691.03,118.96 L691.26,119.47 L691.50,121.05 L691.73,123.77 L691.97,127.83 L692.20,133.66 L692.43,142.56 L692.67,175.41 L692.90,143.96 L693.13,134.99 L693.37,129.05 L693.60,124.89 L693.84,122.09 L694.07,120.46 L694.30,119.92 L694.54,120.46 L694.77,122.09 L695.01,124.89 L695.24,129.05 L695.47,134.99 L695.71,143.96 L695.94,175.57 L696.18,144.01 L696.41,134.98 L696.64,128.99 L696.88,124.80 L697.11,121.97 L697.35,120.32 L697.58,119.78 L697.81,120.32 L698.05,121.97 L698.28,124.80 L698.52,128.99 L698.75,134.98 L698.98,144.01 L699.22,174.03 L699.45,142.44 L699.68,133.64 L699.92,127.88 L700.15,123.88 L700.39,121.20 L700.62,119.65 L700.85,119.14 L701.09,119.65 L701.32,121.20 L701.56,123.88 L701.79,127.88 L702.02,133.64 L702.26,142.44 L702.49,175.36 L702.73,143.52 L702.96,134.45 L703.19,128.45 L703.43,124.24 L703.66,121.41 L703.90,119.76 L704.13,119.22 L704.36,119.76 L704.60,121.41 L704.83,124.24 L705.06,128.45 L705.30,134.45 L705.53,143.52 L705.77,175.39 L706.00,143.43 L706.23,134.32 L706.47,128.29 L706.70,124.07 L706.94,121.22 L707.17,119.57 L707.40,119.03 L707.64,119.57 L707.87,121.22 L708.11,124.07 L708.34,128.29 L708.57,134.32 L708.81,143.43 L709.04,175.19 L709.28,143.23 L709.51,134.15 L709.74,128.15 L709.98,123.95 L710.21,121.13 L710.45,119.49 L710.68,118.95 L710.91,119.49 L711.15,121.13 L711.38,123.95 L711.61,128.15 L711.85,134.15 L712.08,143.23 L712.32,174.50 L712.55,142.67 L712.78,133.72 L713.02,127.85 L713.25,123.76 L713.49,121.02 L713.72,119.42 L713.95,118.90 L714.19,119.42 L714.42,121.02 L714.66,123.76 L714.89,127.85 L715.12,133.72 L715.36,142.67 L715.59,175.35 L715.83,143.70 L716.06,134.68 L716.29,128.72 L716.53,124.54 L716.76,121.73 L716.99,120.10 L717.23,119.56 L717.46,120.10 L717.70,121.73 L717.93,124.54 L718.16,128.72 L718.40,134.68 L718.63,143.70 L718.87,174.89 L719.10,143.50 L719.33,134.63 L719.57,128.78 L719.80,124.70 L720.04,121.95 L720.27,120.36 L720.50,119.84 L720.74,120.36 L720.97,121.95 L721.21,124.70 L721.44,128.78 L721.67,134.63 L721.91,143.50 L722.14,173.90 L722.38,142.85 L722.61,134.22 L722.84,128.58 L723.08,124.67 L723.31,122.05 L723.54,120.54 L723.78,120.04 L724.01,120.54 L724.25,122.05 L724.48,124.67 L724.71,128.58 L724.95,134.22 L725.18,142.85 L725.42,174.62 L725.65,143.42 L725.88,134.63 L726.12,128.86 L726.35,124.83 L726.59,122.13 L726.82,120.56 L727.05,120.04 L727.29,120.56 L727.52,122.13 L727.76,124.83 L727.99,128.86 L728.22,134.63 L728.46,143.42 L728.69,174.15 L728.92,142.72 L729.16,133.94 L729.39,128.19 L729.63,124.20 L729.86,121.52 L730.09,119.97 L730.33,119.46 L730.56,119.97 L730.80,121.52 L731.03,124.20 L731.26,128.19 L731.50,133.94 L731.73,142.72 L731.97,173.22 L732.20,141.80 L732.43,133.17 L732.67,127.57 L732.90,123.70 L733.14,121.12 L733.37,119.63 L733.60,119.14 L733.84,119.63 L734.07,121.12 L734.31,123.70 L734.54,127.57 L734.77,133.17 L735.01,141.80 L735.24,175.49 L735.47,142.58 L735.71,133.18 L735.94,126.97 L736.18,122.61 L736.41,119.67 L736.64,117.96 L736.88,117.40 L737.11,117.96 L737.35,119.67 L737.58,122.61 L737.81,126.97 L738.05,133.18 L738.28,142.58 L738.52,173.75 L738.75,142.57 L738.98,133.92 L739.22,128.28 L739.45,124.37 L739.69,121.75 L739.92,120.24 L740.15,119.75 L740.39,120.24 L740.62,121.75 L740.86,124.37 L741.09,128.28 L741.32,133.92 L741.56,142.57 L741.79,174.67 L742.02,142.85 L742.26,133.89 L742.49,127.99 L742.73,123.88 L742.96,121.12 L743.19,119.52 L743.43,118.99 L743.66,119.52 L743.90,121.12 L744.13,123.88 L744.36,127.99 L744.60,133.89 L744.83,142.85 L745.07,175.09 L745.30,143.70 L745.53,134.78 L745.77,128.90 L746.00,124.79 L746.24,122.02 L746.47,120.42 L746.70,119.89 L746.94,120.42 L747.17,122.02 L747.40,124.79 L747.64,128.90 L747.87,134.78 L748.11,143.70 L748.34,174.29 L748.57,142.70 L748.81,133.85 L749.04,128.06 L749.28,124.02 L749.51,121.32 L749.74,119.76 L749.98,119.24 L750.21,119.76 L750.45,121.32 L750.68,124.02 L750.91,128.06 L751.15,133.85 L751.38,142.70 L751.62,175.61 L751.85,143.74 L752.08,134.61 L752.32,128.57 L752.55,124.33 L752.79,121.47 L753.02,119.80 L753.25,119.26 L753.49,119.80 L753.72,121.47 L753.95,124.33 L754.19,128.57 L754.42,134.61 L754.66,143.74 L754.89,175.58 L755.12,143.54 L755.36,134.38 L755.59,128.31 L755.83,124.05 L756.06,121.18 L756.29,119.51 L756.53,118.96 L756.76,119.51 L757.00,121.18 L757.23,124.05 L757.46,128.31 L757.70,134.38 L757.93,143.54 L758.17,173.69 L758.40,142.65 L758.63,134.05 L758.87,128.44 L759.10,124.56 L759.33,121.96 L759.57,120.46 L759.80,119.97 L760.04,120.46 L760.27,121.96 L760.50,124.56 L760.74,128.44 L760.97,134.05 L761.21,142.65 L761.44,175.59 L761.67,143.60 L761.91,134.45 L762.14,128.39 L762.38,124.13 L762.61,121.27 L762.84,119.60 L763.08,119.05 L763.31,119.60 L763.55,121.27 L763.78,124.13 L764.01,128.39 L764.25,134.45 L764.48,143.60 L764.72,174.89 L764.95,143.26 L765.18,134.32 L765.42,128.43 L765.65,124.31 L765.88,121.55 L766.12,119.94 L766.35,119.42 L766.59,119.94 L766.82,121.55 L767.05,124.31 L767.29,128.43 L767.52,134.32 L767.76,143.26 L767.99,175.07 L768.22,143.69 L768.46,134.79 L768.69,128.91 L768.93,124.81 L769.16,122.05" fill="none" stroke="#aefafa" stroke-width="2.5" stroke-linejoin="round"/>
  <path d="M375.8,562 L375.80,526.09 L376.19,530.88 L376.59,523.71 L376.98,518.33 L377.38,529.69 L377.77,529.21 L378.17,530.13 L378.56,515.31 L378.96,527.26 L379.35,523.09 L379.74,525.87 L380.14,528.41 L380.53,522.86 L380.93,522.63 L381.32,523.00 L381.72,526.49 L382.11,520.74 L382.50,522.53 L382.90,522.13 L383.29,518.10 L383.69,489.92 L384.08,515.79 L384.48,519.79 L384.87,517.38 L385.27,515.59 L385.66,517.40 L386.05,515.92 L386.45,512.98 L386.84,512.50 L387.24,509.93 L387.63,508.34 L388.03,506.47 L388.42,504.42 L388.82,502.02 L389.21,499.32 L389.60,496.40 L390.00,493.08 L390.39,489.08 L390.79,484.00 L391.18,476.43 L391.58,461.74 L391.71,457.01 L391.97,468.01 L392.36,479.38 L392.76,485.88 L393.15,490.53 L393.55,494.24 L393.94,497.37 L394.34,500.25 L394.73,502.83 L395.13,505.18 L395.52,507.18 L395.91,509.32 L396.31,511.39 L396.70,512.93 L397.10,514.68 L397.49,515.43 L397.89,517.15 L398.28,517.89 L398.68,519.04 L399.07,515.99 L399.46,518.25 L399.86,519.90 L400.25,517.73 L400.65,518.30 L401.04,517.44 L401.44,515.22 L401.83,514.79 L402.22,512.23 L402.62,510.97 L403.01,509.15 L403.41,507.31 L403.80,504.85 L404.20,502.86 L404.59,500.39 L404.99,497.76 L405.38,494.85 L405.77,491.54 L406.17,487.55 L406.56,482.43 L406.96,474.86 L407.35,460.17 L407.48,455.44 L407.75,466.44 L408.14,477.82 L408.54,484.32 L408.93,488.98 L409.32,492.70 L409.72,495.83 L410.11,498.59 L410.51,501.31 L410.90,503.73 L411.30,505.95 L411.69,507.91 L412.08,510.01 L412.48,511.30 L412.87,513.56 L413.27,515.69 L413.66,517.00 L414.06,516.68 L414.45,519.43 L414.85,520.35 L415.24,521.48 L415.63,523.57 L416.03,523.78 L416.42,523.68 L416.82,526.11 L417.21,525.58 L417.61,526.85 L418.00,524.58 L418.40,526.57 L418.79,524.83 L419.18,525.46 L419.58,524.91 L419.97,524.02 L420.37,522.73 L420.76,520.41 L421.16,518.46 L421.55,514.97 L421.94,512.01 L422.34,507.62 L422.73,500.78 L423.13,488.66 L423.39,466.43 L423.52,479.94 L423.92,497.96 L424.31,505.62 L424.71,510.73 L425.10,514.35 L425.49,516.75 L425.89,519.01 L426.28,521.16 L426.68,523.86 L427.07,525.97 L427.47,523.19 L427.86,524.18 L428.26,528.46 L428.65,527.68 L429.04,531.69 L429.44,528.53 L429.83,528.93 L430.23,532.21 L430.62,533.91 L431.02,527.25 L431.41,524.89 L431.80,530.69 L432.20,531.67 L432.59,528.63 L432.99,528.91 L433.38,530.05 L433.78,532.03 L434.17,529.65 L434.57,531.23 L434.96,526.95 L435.35,529.71 L435.75,524.30 L436.14,526.54 L436.54,522.23 L436.93,523.09 L437.33,521.41 L437.72,519.18 L438.12,515.33 L438.51,510.03 L438.90,500.74 L439.30,480.56 L439.69,500.77 L440.09,509.74 L440.48,514.96 L440.88,518.97 L441.27,522.05 L441.66,523.82 L442.06,519.88 L442.45,526.12 L442.85,528.19 L443.24,524.90 L443.64,531.92 L444.03,528.92 L444.43,531.35 L444.82,526.25 L445.21,533.90 L445.61,530.82 L446.00,523.13 L446.40,530.15 L446.79,533.56 L447.19,531.08 L447.58,536.37 L447.98,525.60 L448.37,529.99 L448.76,527.28 L449.16,531.30 L449.55,524.13 L449.95,533.34 L450.34,534.63 L450.74,523.98 L451.13,531.98 L451.52,533.10 L451.92,536.54 L452.31,529.57 L452.71,530.21 L453.10,536.02 L453.50,531.40 L453.89,531.36 L454.29,533.18 L454.68,511.53 L455.07,531.53 L455.47,532.19 L455.86,526.34 L456.26,533.26 L456.65,529.98 L457.05,533.21 L457.44,530.07 L457.84,532.01 L458.23,525.36 L458.62,528.30 L459.02,534.70 L459.41,533.94 L459.81,535.00 L460.20,531.85 L460.60,533.33 L460.99,530.53 L461.38,532.48 L461.78,527.47 L462.17,526.44 L462.57,531.56 L462.96,534.34 L463.36,526.81 L463.75,530.70 L464.15,532.46 L464.54,536.63 L464.93,530.79 L465.33,535.01 L465.72,537.08 L466.12,537.98 L466.51,536.05 L466.91,529.99 L467.30,533.23 L467.70,534.39 L468.09,538.78 L468.48,532.42 L468.88,535.97 L469.27,536.88 L469.67,534.17 L470.06,534.72 L470.46,524.21 L470.59,510.21 L470.85,526.06 L471.24,533.53 L471.64,541.06 L472.03,533.29 L472.43,536.45 L472.82,533.97 L473.22,534.73 L473.61,538.21 L474.01,532.77 L474.40,535.26 L474.79,535.31 L475.19,531.19 L475.58,535.12 L475.98,535.05 L476.37,532.23 L476.77,532.53 L477.16,533.68 L477.56,533.36 L477.95,533.29 L478.34,533.02 L478.74,533.47 L479.13,535.24 L479.53,536.12 L479.92,536.06 L480.32,542.44 L480.71,535.90 L481.10,539.45 L481.50,535.69 L481.89,539.09 L482.29,533.02 L482.68,538.52 L483.08,537.16 L483.47,530.83 L483.87,531.71 L484.26,538.43 L484.65,534.70 L485.05,532.79 L485.44,539.41 L485.84,537.93 L486.23,536.65 L486.63,539.14 L487.02,538.42 L487.42,533.01 L487.81,536.31 L488.20,534.23 L488.60,537.49 L488.99,536.95 L489.39,534.95 L489.78,538.61 L490.18,534.64 L490.57,533.89 L490.96,535.50 L491.36,538.35 L491.75,537.21 L492.15,540.43 L492.54,532.97 L492.94,540.49 L493.33,538.09 L493.73,538.30 L494.12,536.63 L494.51,539.83 L494.91,543.55 L495.30,531.85 L495.70,539.54 L496.09,531.54 L496.49,540.95 L496.88,538.85 L497.28,537.28 L497.67,531.73 L498.06,538.93 L498.46,532.07 L498.85,538.41 L499.25,539.92 L499.64,536.52 L500.04,536.84 L500.43,531.49 L500.82,538.11 L501.22,535.26 L501.61,531.33 L502.01,544.05 L502.40,543.06 L502.80,544.02 L503.19,536.09 L503.59,545.63 L503.98,534.84 L504.37,537.03 L504.77,533.67 L505.16,534.47 L505.56,533.98 L505.95,540.46 L506.35,543.59 L506.74,534.37 L507.14,535.82 L507.53,536.88 L507.92,538.48 L508.32,530.43 L508.71,538.29 L509.11,536.53 L509.50,540.47 L509.90,534.56 L510.29,535.67 L510.68,541.26 L511.08,539.94 L511.47,543.63 L511.87,533.98 L512.26,537.82 L512.66,538.60 L513.05,538.03 L513.45,539.98 L513.84,539.15 L514.23,537.57 L514.63,534.67 L515.02,541.89 L515.42,528.66 L515.81,539.65 L516.21,541.70 L516.60,538.56 L517.00,540.43 L517.39,534.50 L517.78,535.86 L518.18,538.65 L518.57,541.90 L518.97,541.43 L519.36,538.16 L519.76,541.61 L520.15,532.90 L520.54,535.20 L520.94,539.81 L521.33,531.66 L521.73,542.00 L522.12,535.14 L522.52,534.60 L522.91,540.58 L523.31,539.21 L523.70,534.73 L524.09,539.41 L524.49,537.60 L524.88,542.47 L525.28,537.08 L525.67,538.11 L526.07,534.97 L526.46,536.33 L526.86,534.49 L527.25,535.81 L527.64,537.23 L528.04,536.10 L528.43,532.98 L528.83,542.13 L529.22,536.39 L529.62,536.67 L530.01,537.53 L530.40,538.55 L530.80,538.39 L531.19,542.87 L531.59,542.77 L531.98,539.16 L532.38,543.74 L532.77,539.15 L533.17,539.67 L533.56,535.39 L533.95,533.34 L534.35,542.95 L534.74,542.53 L535.14,535.86 L535.53,536.73 L535.93,542.70 L536.32,534.84 L536.72,534.58 L537.11,537.68 L537.50,539.44 L537.90,535.69 L538.29,543.88 L538.69,536.45 L539.08,537.25 L539.48,543.55 L539.87,532.28 L540.26,534.54 L540.66,539.47 L541.05,542.36 L541.45,538.49 L541.84,538.30 L542.24,543.25 L542.63,544.34 L543.03,531.90 L543.42,535.41 L543.81,547.18 L544.21,538.74 L544.60,535.69 L545.00,545.56 L545.39,540.09 L545.79,541.24 L546.18,537.48 L546.58,541.43 L546.97,538.33 L547.36,544.03 L547.76,539.68 L548.15,544.01 L548.55,536.49 L548.94,535.71 L549.34,536.73 L549.73,537.65 L550.12,538.27 L550.52,535.26 L550.91,534.80 L551.31,541.33 L551.70,538.88 L552.10,539.79 L552.49,539.66 L552.89,545.51 L553.28,536.50 L553.67,538.52 L554.07,540.45 L554.46,531.90 L554.86,541.14 L555.25,540.54 L555.65,538.53 L556.04,540.32 L556.44,536.34 L556.83,540.93 L557.22,533.16 L557.62,541.07 L558.01,534.54 L558.41,538.10 L558.80,538.97 L559.20,537.91 L559.59,543.74 L559.98,542.81 L560.38,539.43 L560.77,543.52 L561.17,540.94 L561.56,533.80 L561.96,540.89 L562.35,533.68 L562.75,542.28 L563.14,537.70 L563.53,534.76 L563.93,543.26 L564.32,535.39 L564.72,547.35 L565.11,537.08 L565.51,545.84 L565.90,541.07 L566.30,534.87 L566.69,543.37 L567.08,535.16 L567.48,540.98 L567.87,539.97 L568.27,545.90 L568.66,538.90 L569.06,546.26 L569.45,541.23 L569.84,536.87 L570.24,536.89 L570.63,542.78 L571.03,542.32 L571.42,537.15 L571.82,540.34 L572.21,544.71 L572.61,540.07 L573.00,535.25 L573.39,532.18 L573.79,540.54 L574.18,536.10 L574.58,538.32 L574.97,536.76 L575.37,534.17 L575.76,540.22 L576.16,537.84 L576.55,536.45 L576.94,540.27 L577.34,535.54 L577.73,542.81 L578.13,540.34 L578.52,545.80 L578.92,541.72 L579.31,540.71 L579.70,538.65 L580.10,539.28 L580.49,546.80 L580.89,537.56 L581.28,539.96 L581.68,539.84 L582.07,536.82 L582.47,537.26 L582.86,540.42 L583.25,536.23 L583.65,541.24 L584.04,541.03 L584.44,534.70 L584.83,539.48 L585.23,537.38 L585.62,541.75 L586.02,536.16 L586.41,538.09 L586.80,537.26 L587.20,537.55 L587.59,538.57 L587.99,540.34 L588.38,541.34 L588.78,535.45 L589.17,541.90 L589.56,543.16 L589.96,543.15 L590.35,535.70 L590.75,544.43 L591.14,534.12 L591.54,538.66 L591.93,535.84 L592.33,540.64 L592.72,539.75 L593.11,539.77 L593.51,542.41 L593.90,541.09 L594.30,542.55 L594.69,545.04 L595.09,543.16 L595.48,541.62 L595.88,535.76 L596.27,543.04 L596.66,537.08 L597.06,540.62 L597.45,541.21 L597.85,537.58 L598.24,539.46 L598.64,540.58 L599.03,539.41 L599.42,539.46 L599.82,541.37 L600.21,541.43 L600.61,544.52 L601.00,542.15 L601.40,535.89 L601.79,541.48 L602.19,542.01 L602.58,539.57 L602.97,538.24 L603.37,539.72 L603.76,541.04 L604.16,539.21 L604.55,537.04 L604.95,539.68 L605.34,536.93 L605.74,534.95 L606.13,540.82 L606.52,544.05 L606.92,540.41 L607.31,536.00 L607.71,536.14 L608.10,540.31 L608.50,537.75 L608.89,537.76 L609.28,537.46 L609.68,541.95 L610.07,539.79 L610.47,545.10 L610.86,542.24 L611.26,542.78 L611.65,541.15 L612.05,544.86 L612.44,539.46 L612.83,548.88 L613.23,543.42 L613.62,538.25 L614.02,539.83 L614.41,539.55 L614.81,539.81 L615.20,543.01 L615.60,541.55 L615.99,537.38 L616.38,534.96 L616.78,538.15 L617.17,534.31 L617.57,538.20 L617.96,542.60 L618.36,534.80 L618.75,534.59 L619.14,537.78 L619.54,544.51 L619.93,538.67 L620.33,541.07 L620.72,542.16 L621.12,541.17 L621.51,538.32 L621.91,549.55 L622.30,540.82 L622.69,537.39 L623.09,540.18 L623.48,541.39 L623.88,539.41 L624.27,541.46 L624.67,540.36 L625.06,537.23 L625.46,541.84 L625.85,542.70 L626.24,534.78 L626.64,536.39 L627.03,539.59 L627.43,532.73 L627.82,543.16 L628.22,539.81 L628.61,542.45 L629.00,534.77 L629.40,542.60 L629.79,536.84 L630.19,536.63 L630.58,541.64 L630.98,543.69 L631.37,539.20 L631.77,537.37 L632.16,537.64 L632.55,534.82 L632.95,541.82 L633.34,542.59 L633.74,540.88 L634.13,540.21 L634.53,539.65 L634.92,540.64 L635.32,542.62 L635.71,536.83 L636.10,537.40 L636.50,539.83 L636.89,536.27 L637.29,541.51 L637.68,541.46 L638.08,535.24 L638.47,539.25 L638.86,537.19 L639.26,540.11 L639.65,541.11 L640.05,540.03 L640.44,540.91 L640.84,535.29 L641.23,542.50 L641.63,538.27 L642.02,538.83 L642.41,540.80 L642.81,544.51 L643.20,542.00 L643.60,538.59 L643.99,537.29 L644.39,538.35 L644.78,534.72 L645.18,536.61 L645.57,543.39 L645.96,541.86 L646.36,535.59 L646.75,542.98 L647.15,541.99 L647.54,541.24 L647.94,535.11 L648.33,544.78 L648.72,539.12 L649.12,534.98 L649.51,534.77 L649.91,545.36 L650.30,543.08 L650.70,539.69 L651.09,535.74 L651.49,539.85 L651.88,540.06 L652.27,541.10 L652.67,540.45 L653.06,543.17 L653.46,538.17 L653.85,539.36 L654.25,538.40 L654.64,541.57 L655.04,542.72 L655.43,540.64 L655.82,537.78 L656.22,540.31 L656.61,541.70 L657.01,535.51 L657.40,539.08 L657.80,541.56 L658.19,544.77 L658.58,536.84 L658.98,546.19 L659.37,540.24 L659.77,540.91 L660.16,533.15 L660.56,541.64 L660.95,542.46 L661.35,544.28 L661.74,542.48 L662.13,538.60 L662.53,537.84 L662.92,541.02 L663.32,530.70 L663.71,544.59 L664.11,538.76 L664.50,541.53 L664.90,540.96 L665.29,538.60 L665.68,537.84 L666.08,534.85 L666.47,539.70 L666.87,535.69 L667.26,540.10 L667.66,545.08 L668.05,543.25 L668.44,544.65 L668.84,538.12 L669.23,538.83 L669.63,536.63 L670.02,536.38 L670.42,543.41 L670.81,539.86 L671.21,540.22 L671.60,540.61 L671.99,540.14 L672.39,540.43 L672.78,537.52 L673.18,537.27 L673.57,541.57 L673.97,539.62 L674.36,540.62 L674.76,541.74 L675.15,540.81 L675.54,543.45 L675.94,545.69 L676.33,541.58 L676.73,538.72 L677.12,543.40 L677.52,541.84 L677.91,538.87 L678.30,544.88 L678.70,535.64 L679.09,539.05 L679.49,543.84 L679.88,542.74 L680.28,537.03 L680.67,538.68 L681.07,540.86 L681.46,540.06 L681.85,541.29 L682.25,546.89 L682.64,536.50 L683.04,544.03 L683.43,541.83 L683.83,539.09 L684.22,547.33 L684.62,545.49 L685.01,544.43 L685.40,541.81 L685.80,538.52 L686.19,544.14 L686.59,543.87 L686.98,545.60 L687.38,539.75 L687.77,536.65 L688.16,545.53 L688.56,535.02 L688.95,541.23 L689.35,543.35 L689.74,534.74 L690.14,539.21 L690.53,542.11 L690.93,538.61 L691.32,532.44 L691.71,541.90 L692.11,535.74 L692.50,541.42 L692.90,530.21 L693.29,542.13 L693.69,544.29 L694.08,538.46 L694.48,546.48 L694.87,540.27 L695.26,538.93 L695.66,542.00 L696.05,544.85 L696.45,539.91 L696.84,543.07 L697.24,541.58 L697.63,548.37 L698.02,544.18 L698.42,543.05 L698.81,534.28 L699.21,542.66 L699.60,546.47 L700.00,541.39 L700.39,545.15 L700.79,538.82 L701.18,540.77 L701.57,534.39 L701.97,542.63 L702.36,535.14 L702.76,544.79 L703.15,539.58 L703.55,543.41 L703.94,543.38 L704.34,541.92 L704.73,536.48 L705.12,542.87 L705.52,543.54 L705.91,541.40 L706.31,542.22 L706.70,543.43 L707.10,537.12 L707.49,539.91 L707.88,537.06 L708.28,535.69 L708.67,543.58 L709.07,541.33 L709.46,543.43 L709.86,539.85 L710.25,541.60 L710.65,545.63 L711.04,544.40 L711.43,544.09 L711.83,542.74 L712.22,539.39 L712.62,541.65 L713.01,533.83 L713.41,541.32 L713.80,538.29 L714.20,535.80 L714.59,539.60 L714.98,532.75 L715.38,540.79 L715.77,538.77 L716.17,540.28 L716.56,542.29 L716.96,541.49 L717.35,542.36 L717.74,541.66 L718.14,538.97 L718.53,537.44 L718.93,536.76 L719.32,542.73 L719.72,524.96 L720.11,544.69 L720.51,541.42 L720.90,537.35 L721.29,540.69 L721.69,536.01 L722.08,542.66 L722.48,546.85 L722.87,541.91 L723.27,538.86 L723.66,542.14 L724.06,539.35 L724.45,541.63 L724.84,539.42 L725.24,542.39 L725.63,546.79 L726.03,540.18 L726.42,538.78 L726.82,533.92 L727.21,545.27 L727.60,538.44 L728.00,543.26 L728.39,541.27 L728.79,540.52 L729.18,540.59 L729.58,534.82 L729.97,538.87 L730.37,537.81 L730.76,541.38 L731.15,540.14 L731.55,535.55 L731.94,544.25 L732.34,545.00 L732.73,540.89 L733.13,537.63 L733.52,541.04 L733.92,537.05 L734.31,544.13 L734.70,539.90 L735.10,540.69 L735.49,537.66 L735.89,543.47 L736.28,537.14 L736.68,539.71 L737.07,537.92 L737.46,534.78 L737.86,539.82 L738.25,535.15 L738.65,543.49 L739.04,535.73 L739.44,545.56 L739.83,543.65 L740.23,537.89 L740.62,539.20 L741.01,539.79 L741.41,536.79 L741.80,539.77 L742.20,541.09 L742.59,536.96 L742.99,541.89 L743.38,540.63 L743.78,542.60 L744.17,539.15 L744.56,539.65 L744.96,548.94 L745.35,539.62 L745.75,535.83 L746.14,540.77 L746.54,543.59 L746.93,536.82 L747.32,539.26 L747.72,539.78 L748.11,545.14 L748.51,547.90 L748.90,547.56 L749.30,538.60 L749.69,542.15 L750.09,544.85 L750.48,548.79 L750.87,536.07 L751.27,539.84 L751.66,540.09 L752.06,537.19 L752.45,541.60 L752.85,536.02 L753.24,538.24 L753.64,539.39 L754.03,543.74 L754.42,540.98 L754.82,536.16 L755.21,543.56 L755.61,540.63 L756.00,542.43 L756.40,541.98 L756.79,539.46 L757.18,540.81 L757.58,541.80 L757.97,540.31 L758.37,535.81 L758.76,538.00 L759.16,540.64 L759.55,540.45 L759.95,538.13 L760.34,541.19 L760.73,543.34 L761.13,544.35 L761.52,542.77 L761.92,541.84 L762.31,540.35 L762.71,540.78 L763.10,543.43 L763.50,537.48 L763.89,530.66 L764.28,533.68 L764.68,543.94 L765.07,532.23 L765.47,537.53 L765.86,541.84 L766.26,546.67 L766.65,539.89 L767.04,533.40 L767.44,537.57 L767.83,541.40 L768.23,537.66 L768.62,540.47 L769.02,538.53 L769.41,539.06 L769.81,537.67 L770.20,544.48 L770.2,562 Z" fill="#aefafa" stroke="#aefafa" stroke-width="0.6" stroke-linejoin="round"/>
  <rect x="386.5" y="455" width="29.5" height="107" fill="rgba(0,0,0,0.035)"/>
  <rect x="386.5" y="117" width="29.5" height="59" fill="rgba(0,0,0,0.035)"/>
  <g fill="none" stroke="#d8d8d8" stroke-width="1">
    <circle cx="303.5" cy="340" r="2.6"/>
    <circle cx="552.5" cy="373" r="2.6"/>
  </g>
</svg>

<!-- chart buttons -->
<svg class="abs" style="left:390px;top:182px" width="24" height="24" viewBox="0 0 24 24"><rect x="0.5" y="0.5" width="22.5" height="22.5" rx="4" fill="rgba(128,128,128,0.05)" stroke="rgba(255,255,255,0.13)"/><path d="M11.5,5 V18 M5,11.5 H18" stroke="rgba(255,255,255,0.2)" stroke-width="1.6" fill="none"/></svg>
<svg class="abs" style="left:390px;top:214px" width="24" height="24" viewBox="0 0 24 24"><rect x="0.5" y="0.5" width="22.5" height="22.5" rx="4" fill="rgba(128,128,128,0.05)" stroke="rgba(255,255,255,0.13)"/><path d="M5,11.5 H18" stroke="rgba(255,255,255,0.2)" stroke-width="1.6" fill="none"/></svg>
<svg class="abs" style="left:390px;top:246px" width="24" height="24" viewBox="0 0 24 24"><rect x="0.5" y="0.5" width="22.5" height="22.5" rx="4" fill="rgba(128,128,128,0.05)" stroke="rgba(255,255,255,0.13)"/><path d="M4,8 L9,11.5 L4,15 Z M19,8 L14,11.5 L19,15 Z" fill="rgba(255,255,255,0.16)"/><path d="M11.5,4 V6 M11.5,10.5 V12.5 M11.5,17 V19" stroke="rgba(255,255,255,0.2)" stroke-width="1.4"/></svg>
<svg class="abs" style="left:390px;top:278px" width="24" height="24" viewBox="0 0 24 24"><rect x="0.5" y="0.5" width="22.5" height="22.5" rx="4" fill="rgba(128,128,128,0.05)" stroke="rgba(255,255,255,0.13)"/><path d="M5.5,5.5 H17.5 M5.5,18.5 H17.5 M11.5,5.5 V18.5" stroke="rgba(255,255,255,0.2)" stroke-width="1.5" fill="none"/></svg>
<svg class="abs" style="left:390px;top:420px" width="24" height="24" viewBox="0 0 24 24"><rect x="0.5" y="0.5" width="22.5" height="22.5" rx="4" fill="rgba(128,128,128,0.05)" stroke="rgba(255,255,255,0.13)"/><path d="M4,9 L8,14 L13,3.5" stroke="rgba(255,255,255,0.16)" stroke-width="1.6" fill="none"/><path d="M17,5 v1 M18,9 v1 M18,13 v1 M7,18 h1 M11,18 h1 M15,18 h1" stroke="rgba(255,255,255,0.16)" stroke-width="1.2"/></svg>
<svg class="abs" style="left:390px;top:452px" width="24" height="24" viewBox="0 0 24 24"><rect x="0.5" y="0.5" width="22.5" height="22.5" rx="4" fill="rgba(128,128,128,0.05)" stroke="rgba(255,255,255,0.13)"/><path d="M4.5,18 V6 L8,8 L11.5,5.5 L15,8 L18.5,6 V18 Z" stroke="rgba(255,255,255,0.16)" stroke-width="1.3" fill="none"/></svg>
<svg class="abs" style="left:390px;top:484px" width="24" height="24" viewBox="0 0 24 24"><rect x="0.5" y="0.5" width="22.5" height="22.5" rx="4" fill="rgba(128,128,128,0.05)" stroke="rgba(255,255,255,0.13)"/><path d="M11.5,5 V18 M5,11.5 H18" stroke="rgba(255,255,255,0.2)" stroke-width="1.6" fill="none"/></svg>
<svg class="abs" style="left:390px;top:516px" width="24" height="24" viewBox="0 0 24 24"><rect x="0.5" y="0.5" width="22.5" height="22.5" rx="4" fill="rgba(128,128,128,0.05)" stroke="rgba(255,255,255,0.13)"/><path d="M5,11.5 H18" stroke="rgba(255,255,255,0.2)" stroke-width="1.6" fill="none"/></svg>
<svg class="abs" style="left:390px;top:548px" width="24" height="24" viewBox="0 0 24 24"><rect x="0.5" y="0.5" width="22.5" height="22.5" rx="4" fill="rgba(128,128,128,0.05)" stroke="rgba(255,255,255,0.13)"/><path d="M4,8 L9,11.5 L4,15 Z M19,8 L14,11.5 L19,15 Z" fill="rgba(255,255,255,0.16)"/><path d="M11.5,4 V6 M11.5,10.5 V12.5 M11.5,17 V19" stroke="rgba(255,255,255,0.2)" stroke-width="1.4"/></svg>
<svg class="abs" style="left:390px;top:118px" width="24" height="24" viewBox="0 0 24 24"><rect x="0.5" y="0.5" width="22.5" height="22.5" rx="4" fill="rgba(128,128,128,0.05)" stroke="rgba(255,255,255,0.13)"/><path d="M4,9 L8,14 L13,3.5" stroke="rgba(255,255,255,0.16)" stroke-width="1.6" fill="none"/><path d="M17,5 v1 M18,9 v1 M18,13 v1 M7,18 h1 M11,18 h1 M15,18 h1" stroke="rgba(255,255,255,0.16)" stroke-width="1.2"/></svg>
<svg class="abs" style="left:390px;top:150px" width="24" height="24" viewBox="0 0 24 24"><rect x="0.5" y="0.5" width="22.5" height="22.5" rx="4" fill="rgba(128,128,128,0.05)" stroke="rgba(255,255,255,0.13)"/><path d="M4.5,18 V6 L8,8 L11.5,5.5 L15,8 L18.5,6 V18 Z" stroke="rgba(255,255,255,0.16)" stroke-width="1.3" fill="none"/></svg>
<!-- chart text -->
<div class="ct" style="left:445.5px;top:85px;width:200px;text-align:center;letter-spacing:0.35px">Осциллограмма</div>
<div class="ct" style="left:446px;top:387px;width:200px;text-align:center">Спектр</div>

<!--LABELS-->
<div class="ct yl" style="left:306.5px;top:109.8px">8,34</div>
<div class="ct yl" style="left:306.5px;top:129.4px">7,5</div>
<div class="ct yl" style="left:306.5px;top:149.0px">6,67</div>
<div class="ct yl" style="left:306.5px;top:168.6px">5,84</div>
<div class="ct yl" style="left:306.5px;top:188.2px">5,0</div>
<div class="ct yl" style="left:306.5px;top:207.8px">4,17</div>
<div class="ct yl" style="left:306.5px;top:227.4px">3,34</div>
<div class="ct yl" style="left:306.5px;top:247.0px">2,5</div>
<div class="ct yl" style="left:306.5px;top:266.6px">1,67</div>
<div class="ct yl" style="left:306.5px;top:286.2px">0,83</div>
<div class="ct yl" style="left:306.5px;top:305.8px">0,0</div>
<div class="ct xl" style="left:345.3px;top:332.3px;letter-spacing:0.8px">0.00</div>
<div class="ct xl" style="left:385.0px;top:332.3px;letter-spacing:0.8px">0.10</div>
<div class="ct xl" style="left:424.7px;top:332.3px;letter-spacing:0.8px">0.20</div>
<div class="ct xl" style="left:464.4px;top:332.3px;letter-spacing:0.8px">0.30</div>
<div class="ct xl" style="left:504.1px;top:332.3px;letter-spacing:0.8px">0.40</div>
<div class="ct xl" style="left:543.8px;top:332.3px;letter-spacing:0.8px">0.50</div>
<div class="ct xl" style="left:583.5px;top:332.3px;letter-spacing:0.8px">0.60</div>
<div class="ct xl" style="left:623.2px;top:332.3px;letter-spacing:0.8px">0.70</div>
<div class="ct xl" style="left:662.9px;top:332.3px;letter-spacing:0.8px">0.80</div>
<div class="ct xl" style="left:702.6px;top:332.3px;letter-spacing:0.8px">0.90</div>
<div class="ct xl" style="left:742.3px;top:332.3px;letter-spacing:0.8px">1.00</div>
<div class="ct xl" style="left:522px;top:345.3px;width:100px;letter-spacing:0.7px">Время [с]</div>
<div class="ct" style="left:223px;top:205px;width:200px;text-align:center;transform:rotate(-90deg);letter-spacing:1.05px">Яркость [кд/м^2]</div>
<div class="ct yl" style="left:306.5px;top:400.0px">0</div>
<div class="ct yl" style="left:306.5px;top:431.1px">-20</div>
<div class="ct yl" style="left:306.5px;top:462.2px">-40</div>
<div class="ct yl" style="left:306.5px;top:493.3px">-60</div>
<div class="ct yl" style="left:306.5px;top:524.4px">-80</div>
<div class="ct yl" style="left:306.5px;top:555.5px">-100</div>
<div class="ct xl" style="left:346.4px;top:571.5px;letter-spacing:0.8px">0</div>
<div class="ct xl" style="left:412.4px;top:571.5px;letter-spacing:0.8px">500</div>
<div class="ct xl" style="left:478.5px;top:571.5px;letter-spacing:0.8px">1000</div>
<div class="ct xl" style="left:544.5px;top:571.5px;letter-spacing:0.8px">1500</div>
<div class="ct xl" style="left:610.6px;top:571.5px;letter-spacing:0.8px">2000</div>
<div class="ct xl" style="left:676.6px;top:571.5px;letter-spacing:0.8px">2500</div>
<div class="ct xl" style="left:742.7px;top:571.5px;letter-spacing:0.8px">3000</div>
<div class="ct xl" style="left:523px;top:585px;width:100px;letter-spacing:0.75px">Частота [Гц]</div>
<div class="ct" style="left:226px;top:477px;width:200px;text-align:center;transform:rotate(-90deg);letter-spacing:0.7px">Амплитуда [дБ]</div>
<!--/LABELS-->
</body>
</html>
